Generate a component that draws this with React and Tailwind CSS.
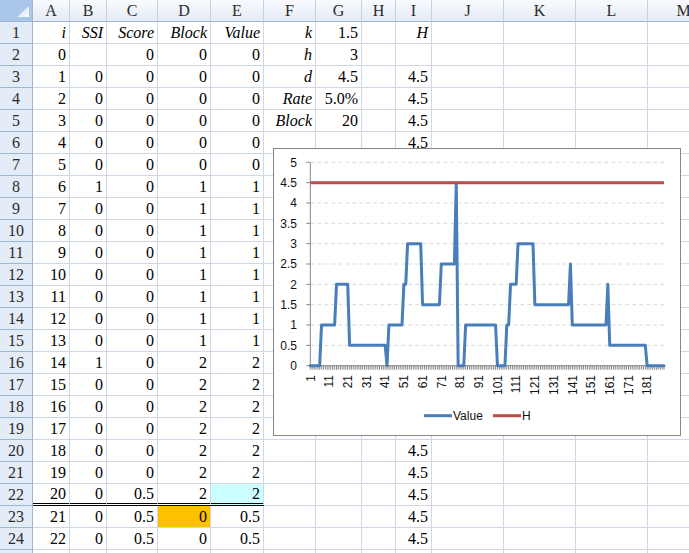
import React from "react";

// spreadsheet columns (width includes the 1px right gridline)
const COLS = [
  { l: "A", w: "w-[37px]" },
  { l: "B", w: "w-[37px]" },
  { l: "C", w: "w-[51px]" },
  { l: "D", w: "w-[53px]" },
  { l: "E", w: "w-[53px]" },
  { l: "F", w: "w-[52px]" },
  { l: "G", w: "w-[46px]" },
  { l: "H", w: "w-[34px]" },
  { l: "I", w: "w-[36px]" },
  { l: "J", w: "w-[72px]" },
  { l: "K", w: "w-[72px]" },
  { l: "L", w: "w-[72px]" },
  { l: "M", w: "w-[72px]" },
];

const ROWS = [
  ["i", "SSI", "Score", "Block", "Value", "k", "1.5", "", "H"],
  ["0", "", "0", "0", "0", "h", "3", "", ""],
  ["1", "0", "0", "0", "0", "d", "4.5", "", "4.5"],
  ["2", "0", "0", "0", "0", "Rate", "5.0%", "", "4.5"],
  ["3", "0", "0", "0", "0", "Block", "20", "", "4.5"],
  ["4", "0", "0", "0", "0", "", "", "", "4.5"],
  ["5", "0", "0", "0", "0", "", "", "", "4.5"],
  ["6", "1", "0", "1", "1", "", "", "", "4.5"],
  ["7", "0", "0", "1", "1", "", "", "", "4.5"],
  ["8", "0", "0", "1", "1", "", "", "", "4.5"],
  ["9", "0", "0", "1", "1", "", "", "", "4.5"],
  ["10", "0", "0", "1", "1", "", "", "", "4.5"],
  ["11", "0", "0", "1", "1", "", "", "", "4.5"],
  ["12", "0", "0", "1", "1", "", "", "", "4.5"],
  ["13", "0", "0", "1", "1", "", "", "", "4.5"],
  ["14", "1", "0", "2", "2", "", "", "", "4.5"],
  ["15", "0", "0", "2", "2", "", "", "", "4.5"],
  ["16", "0", "0", "2", "2", "", "", "", "4.5"],
  ["17", "0", "0", "2", "2", "", "", "", "4.5"],
  ["18", "0", "0", "2", "2", "", "", "", "4.5"],
  ["19", "0", "0", "2", "2", "", "", "", "4.5"],
  ["20", "0", "0.5", "2", "2", "", "", "", "4.5"],
  ["21", "0", "0.5", "0", "0.5", "", "", "", "4.5"],
  ["22", "0", "0.5", "0", "0.5", "", "", "", "4.5"],
  ["", "", "", "", "", "", "", "", ""],
];

// Value series as runs of [from, to, value]
const RUNS = [
  [0, 5, 0], [6, 13, 1], [14, 20, 2], [21, 40, 0.5], [41, 41, 0],
  [42, 49, 1], [50, 51, 2], [52, 59, 3], [60, 69, 1.5], [70, 77, 2.5],
  [78, 78, 4.5], [79, 82, 0], [83, 99, 1], [100, 104, 0], [105, 106, 1],
  [107, 110, 2], [111, 119, 3], [120, 138, 1.5], [139, 139, 2.5],
  [140, 158, 1], [159, 159, 2], [160, 179, 0.5], [180, 189, 0],
];
const VALUES = [];
RUNS.forEach(([a, b, v]) => {
  for (let i = a; i <= b; i++) VALUES.push(v);
});

const X0 = 36.3;
const DX = (390 - 36.3) / 189;
const Y0 = 216.7;
const U = (216.7 - 13.3) / 5;
const px = (i) => X0 + i * DX;
const py = (v) => Y0 - v * U;

function cellClass(r, ci) {
  let cls = "border-r border-r-[#d0d7e5] ";
  if (r === 22 && ci < 5) cls += "border-b-[3px] border-double border-b-black ";
  else cls += "border-b border-b-[#d0d7e5] ";
  if (r === 22 && ci === 4) cls += "bg-[#ccffff] ";
  if (r === 23 && ci === 3) cls += "bg-[#ffc000] ";
  if ((r === 1 && ci !== 6) || ci === 5) cls += "italic ";
  return cls;
}

function Chart() {
  const grid = [0.5, 1, 1.5, 2, 2.5, 3, 3.5, 4, 4.5, 5];
  const labels = ["0", "0.5", "1", "1.5", "2", "2.5", "3", "3.5", "4", "4.5", "5"];
  const linePts = VALUES.map((v, i) => `${px(i).toFixed(2)},${py(v).toFixed(2)}`).join(" ");
  return (
    <div className="absolute left-[273px] top-[148px] w-[408px] h-[288px] border border-[#868686] bg-white">
      <svg width="406" height="286" fontFamily="'Liberation Sans', Arial, sans-serif" fontSize="12">
        {grid.map((v) => (
          <line key={v} x1={X0} x2={390} y1={py(v)} y2={py(v)} stroke="#d9d9d9" strokeDasharray="4 3" />
        ))}
        {labels.map((t, k) => (
          <g key={t}>
            <line x1={X0 - 4} x2={X0} y1={py(k * 0.5)} y2={py(k * 0.5)} stroke="#868686" />
            <text x={23} y={py(k * 0.5)} dy="0.35em" textAnchor="end" fill="#111">{t}</text>
          </g>
        ))}
        {VALUES.map((_, i) => (
          <line key={i} x1={px(i)} x2={px(i)} y1={Y0} y2={Y0 + 4} stroke="#868686" />
        ))}
        <line x1={X0} x2={X0} y1={py(5)} y2={Y0} stroke="#868686" />
        <line x1={X0} x2={390} y1={Y0} y2={Y0} stroke="#868686" />
        {Array.from({ length: 19 }, (_, k) => k * 10).map((i) => (
          <text key={i} transform={`translate(${px(i)},226) rotate(-90)`} dy="0.35em" textAnchor="end" fill="#111">{i + 1}</text>
        ))}
        <polyline points={linePts} fill="none" stroke="#4a7ebb" strokeWidth="3" strokeLinejoin="round" strokeLinecap="round" />
        <line x1={X0} x2={390} y1={py(4.5)} y2={py(4.5)} stroke="#be4b48" strokeWidth="3" />
        <line x1={150} x2={178} y1={266.7} y2={266.7} stroke="#4a7ebb" strokeWidth="3" />
        <text x={179} y={266.7} dy="0.35em" fill="#111">Value</text>
        <line x1={219} x2={247} y1={266.7} y2={266.7} stroke="#be4b48" strokeWidth="3" />
        <text x={248} y={266.7} dy="0.35em" fill="#111">H</text>
      </svg>
    </div>
  );
}

export default function App() {
  return (
    <div className="relative w-[689px] h-[553px] overflow-hidden bg-white font-['Liberation_Serif',serif] text-[16px] text-black">
      {/* column headers */}
      <div className="flex h-[22px]">
        <div className="w-[33px] shrink-0 border-r border-b border-[#9eb6ce] bg-[#aac5ea] relative">
          <svg className="absolute left-0 top-0" width="32" height="21">
            <defs>
              <linearGradient id="tri" x1="0" y1="0" x2="1" y2="1">
                <stop offset="0" stopColor="#c4d6f0" />
                <stop offset="1" stopColor="#ffffff" />
              </linearGradient>
            </defs>
            <polygon points="29,6 29,17 17,17" fill="url(#tri)" />
          </svg>
        </div>
        {COLS.map((c) => (
          <div
            key={c.l}
            className={`${c.w} shrink-0 border-r border-r-[#c5d2e3] border-b border-b-[#9eb6ce] bg-linear-to-b from-[#f8fafd] to-[#e4ebf6] flex items-center justify-center text-[#2b2b2b]`}
          >
            {c.l}
          </div>
        ))}
      </div>
      {/* rows */}
      {ROWS.map((row, ri) => {
        const r = ri + 1;
        return (
          <div key={r} className="flex h-[22px]">
            <div className="w-[33px] shrink-0 border-r border-b border-[#9eb6ce] bg-[#e4ecf7] flex items-center justify-center text-[#2b2b2b]">
              {r}
            </div>
            {COLS.map((c, ci) => (
              <div
                key={c.l}
                className={`${c.w} ${cellClass(r, ci)} shrink-0 flex items-center justify-end pr-[3px] whitespace-nowrap`}
              >
                {row[ci] || ""}
              </div>
            ))}
          </div>
        );
      })}
      <Chart />
    </div>
  );
}
